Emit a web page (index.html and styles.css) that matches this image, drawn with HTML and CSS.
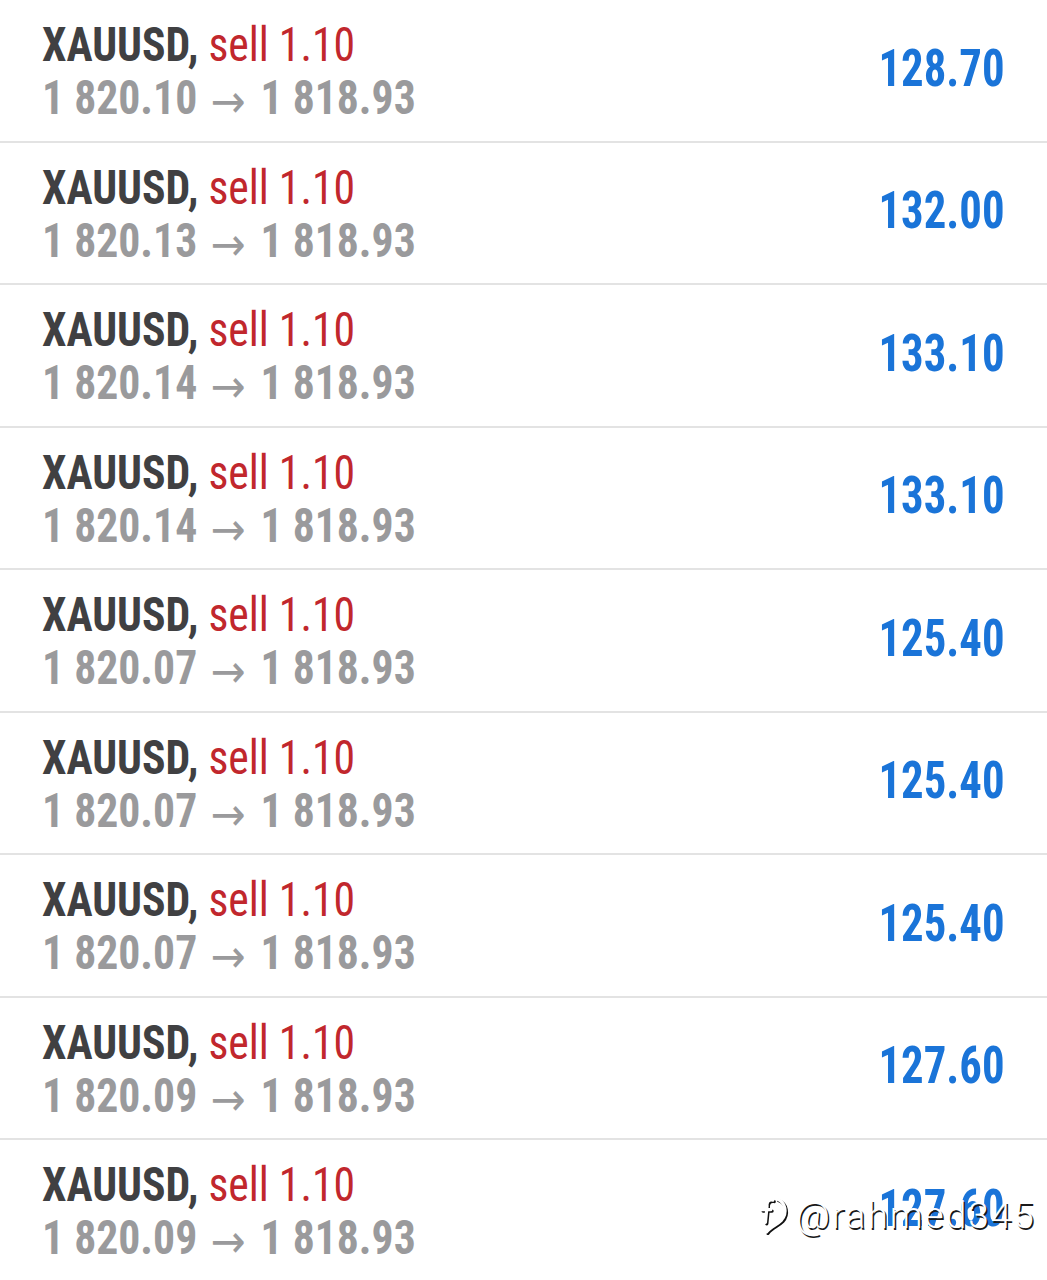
FILE: index.html
```html
<!DOCTYPE html>
<html lang="en">
<head>
<meta charset="utf-8">
<title>Closed positions</title>
<link rel="stylesheet" href="styles.css">
</head>
<body>
<ul class="deals">
  <li class="deal">
    <div class="info">
      <div class="title"><span class="sym">XAUUSD,</span> <span class="side">sell 1.10</span></div>
      <div class="prices"><span>1 820.10</span><span class="arrow">→</span><span>1 818.93</span></div>
    </div>
    <div class="profit">128.70</div>
  </li>
  <li class="deal">
    <div class="info">
      <div class="title"><span class="sym">XAUUSD,</span> <span class="side">sell 1.10</span></div>
      <div class="prices"><span>1 820.13</span><span class="arrow">→</span><span>1 818.93</span></div>
    </div>
    <div class="profit">132.00</div>
  </li>
  <li class="deal">
    <div class="info">
      <div class="title"><span class="sym">XAUUSD,</span> <span class="side">sell 1.10</span></div>
      <div class="prices"><span>1 820.14</span><span class="arrow">→</span><span>1 818.93</span></div>
    </div>
    <div class="profit">133.10</div>
  </li>
  <li class="deal">
    <div class="info">
      <div class="title"><span class="sym">XAUUSD,</span> <span class="side">sell 1.10</span></div>
      <div class="prices"><span>1 820.14</span><span class="arrow">→</span><span>1 818.93</span></div>
    </div>
    <div class="profit">133.10</div>
  </li>
  <li class="deal">
    <div class="info">
      <div class="title"><span class="sym">XAUUSD,</span> <span class="side">sell 1.10</span></div>
      <div class="prices"><span>1 820.07</span><span class="arrow">→</span><span>1 818.93</span></div>
    </div>
    <div class="profit">125.40</div>
  </li>
  <li class="deal">
    <div class="info">
      <div class="title"><span class="sym">XAUUSD,</span> <span class="side">sell 1.10</span></div>
      <div class="prices"><span>1 820.07</span><span class="arrow">→</span><span>1 818.93</span></div>
    </div>
    <div class="profit">125.40</div>
  </li>
  <li class="deal">
    <div class="info">
      <div class="title"><span class="sym">XAUUSD,</span> <span class="side">sell 1.10</span></div>
      <div class="prices"><span>1 820.07</span><span class="arrow">→</span><span>1 818.93</span></div>
    </div>
    <div class="profit">125.40</div>
  </li>
  <li class="deal">
    <div class="info">
      <div class="title"><span class="sym">XAUUSD,</span> <span class="side">sell 1.10</span></div>
      <div class="prices"><span>1 820.09</span><span class="arrow">→</span><span>1 818.93</span></div>
    </div>
    <div class="profit">127.60</div>
  </li>
  <li class="deal">
    <div class="info">
      <div class="title"><span class="sym">XAUUSD,</span> <span class="side">sell 1.10</span></div>
      <div class="prices"><span>1 820.09</span><span class="arrow">→</span><span>1 818.93</span></div>
    </div>
    <div class="profit">127.60</div>
  </li>
</ul>
<div class="watermark">
  <svg class="wm-logo" viewBox="0 0 32 40" width="34" height="44" aria-hidden="true">
    <g fill="none" stroke-linecap="round" stroke-linejoin="round">
      <g stroke="#111" stroke-width="3" transform="translate(1.3 1.3)">
        <path d="M14 6 C 10 5, 8 8, 8.5 12 L 7 27"/>
        <path d="M3.5 15 L 12 15"/>
        <path d="M18 5 C 26 8, 28 18, 22 25 C 18 29, 12 31, 8 36"/>
      </g>
      <g stroke="#fff" stroke-width="3">
        <path d="M14 6 C 10 5, 8 8, 8.5 12 L 7 27"/>
        <path d="M3.5 15 L 12 15"/>
        <path d="M18 5 C 26 8, 28 18, 22 25 C 18 29, 12 31, 8 36"/>
      </g>
    </g>
  </svg>
  <span class="wm-text">@rahmed345</span>
</div>
</body>
</html>
```
FILE: styles.css
```css
html, body {
  margin: 0;
  padding: 0;
  background: #ffffff;
}

body {
  font-family: Roboto, "Noto Sans", sans-serif;
  font-stretch: 75%;
  overflow: hidden;
}

.deals {
  list-style: none;
  margin: 0;
  padding: 0;
}

.deal {
  box-sizing: border-box;
  height: 142.5px;
  display: flex;
  align-items: center;
  justify-content: space-between;
  padding: 0 42px 4px 42px;
  border-bottom: 2.5px solid #e3e3e3;
}

.info {
  display: flex;
  flex-direction: column;
  transform: scaleX(0.91);
  transform-origin: left center;
  white-space: nowrap;
  padding-top: 6px;
}

.title,
.prices {
  font-size: 48px;
  line-height: 53px;
}

.sym {
  font-weight: 700;
  color: #404042;
}

.side {
  font-weight: 400;
  color: #c1272d;
}

.prices {
  font-weight: 700;
  color: #9a9a9c;
}

.arrow {
  font-family: "DejaVu Sans", sans-serif;
  font-stretch: 100%;
  font-weight: 400;
  font-size: 46px;
  line-height: 0;
  margin: 0 16px 0 15px;
  position: relative;
  top: 3px;
}

.profit {
  font-size: 52px;
  font-weight: 700;
  color: #1a74d8;
  transform: scaleX(0.86);
  transform-origin: right center;
  white-space: nowrap;
}

.watermark {
  position: absolute;
  left: 758px;
  top: 1193px;
  display: flex;
  align-items: center;
  gap: 4px;
}

.wm-text {
  font-family: Roboto, "Noto Sans", sans-serif;
  font-stretch: 100%;
  font-weight: 300;
  font-size: 37px;
  letter-spacing: 2px;
  color: #ffffff;
  text-shadow: 1.5px 1.5px 0 #1a1a1a;
}
```
